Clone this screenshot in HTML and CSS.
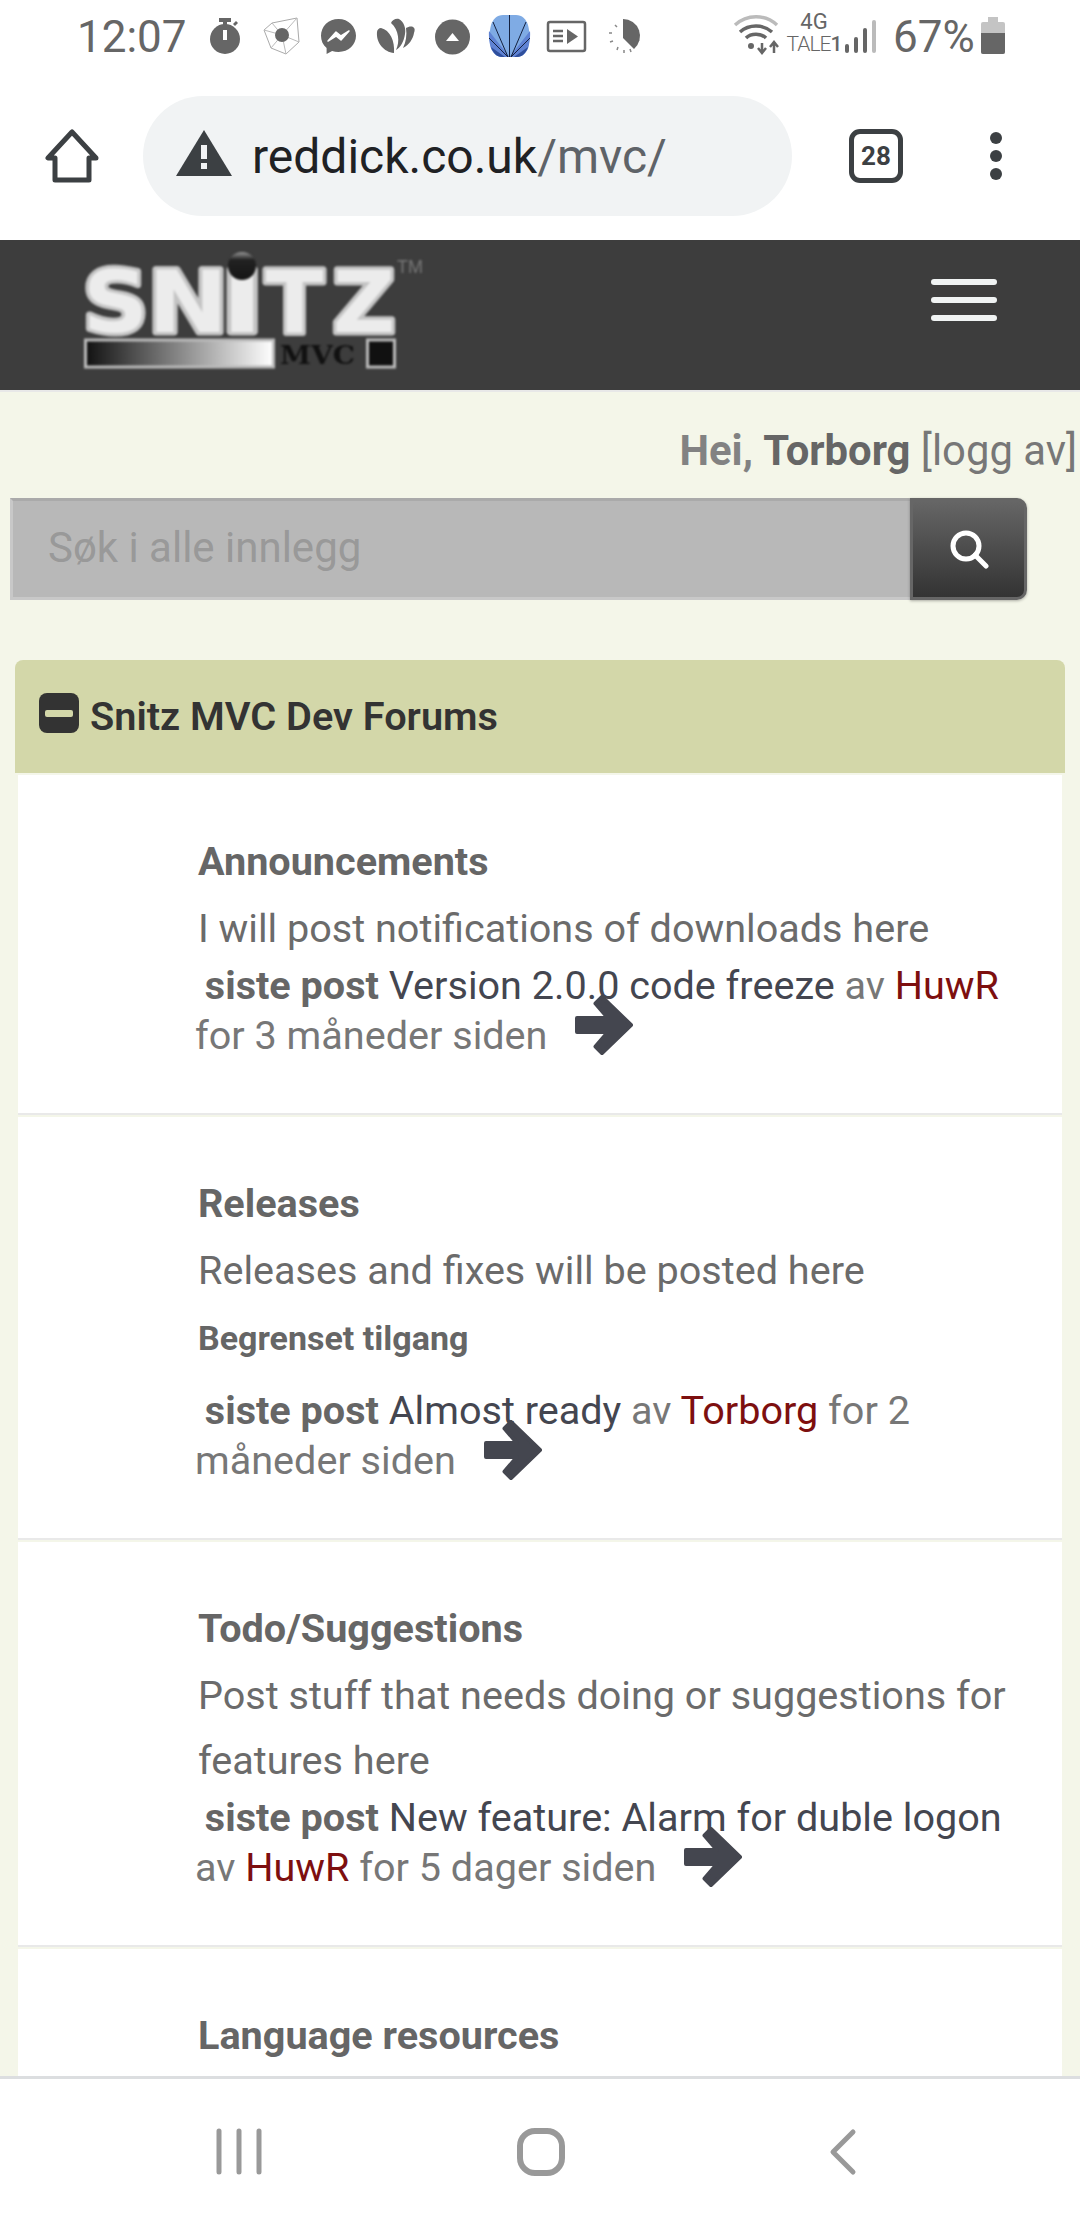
FILE: index.html
```html
<!DOCTYPE html>
<html lang="nb">
<head>
  <meta charset="UTF-8" />
  <meta name="viewport" content="width=device-width, initial-scale=1.0">
  <title>Snitz MVC Dev Forums</title>
  <link rel="stylesheet" href="styles.css">
</head>
<body>

  <!-- Telefonens statuslinje -->
  <div class="status-bar">
    <span class="clock">12:07</span>
    <div class="notif-icons">
      <svg class="notif" viewBox="0 0 57 60"><path d="M23 18h12v4h-12zM27 22h4v4h-4z" fill="#666"/><path d="M37 24l3-3 2 2-3 3z" fill="#666"/><circle cx="29" cy="39" r="15" fill="#666"/><rect x="27" y="30" width="4" height="10" fill="#fff"/></svg>
      <svg class="notif" viewBox="0 0 57 60"><path d="M11 30l8-7 25-5 2 24-13 12-15-6z" fill="none" stroke="#aaa" stroke-width="1"/><path d="M11 30l18 5M19 23l10 12M44 18l-15 17M46 42l-17-7M33 54l-4-19M18 48l11-13" stroke="#bbb" stroke-width="1"/><circle cx="29" cy="35" r="7" fill="#666"/></svg>
      <svg class="notif" viewBox="0 0 57 60"><path d="M28.500 19c-10 0-17.500 7.400-17.500 16.800 0 5 2 9.300 5.600 12.300v6l5.500-3c2 .6 4.100.9 6.400.9 10 0 17.500-7.300 17.500-16.200S38.500 19 28.500 19z" fill="#666"/><path d="M18 41l8-9 5 4 8-5-8 9-5-4z" fill="#fff" stroke="#fff" stroke-width="1.500" stroke-linejoin="round"/></svg>
      <svg class="notif" viewBox="0 0 57 60"><path d="M27 53C17 52 9 43 10 32c0-2 2-4 4-4 9 2 14 13 13 25z" fill="#666"/><path d="M29 50c4-8 3-20-5-27 1-3 5-5 8-4 5 3 7 9 6 15-1 7-4 13-9 16z" fill="#666"/><path d="M36 48c3-6 4-13 3-20 2-1 5-2 7-1 2 1 2 3 1 6-1 6-5 12-11 15z" fill="#666"/></svg>
      <svg class="notif" viewBox="0 0 57 60"><circle cx="28.500" cy="37" r="17.500" fill="#666"/><path d="M22 41l6.500-8 6.500 8z" fill="#fff"/></svg>
      <svg class="notif" viewBox="0 0 57 60">
        <path d="M22 15h13c6 0 10 4 12 10 2 8 2 16 0 22-2 6-6 10-12 10h-13c-6 0-10-4-12-10-2-6-2-14 0-22 2-6 6-10 12-10z" fill="#7fabe4"/>
        <path d="M8 31l20.500 26h-7c-6 0-10-4-12-10-1-5-2-10-1.500-16zM49 31l-20.500 26h7c6 0 10-4 12-10 1-5 2-10 1.500-16z" fill="#5f82d3"/>
        <path d="M10 47l14 10h-3c-5 0-9-4-11-10zM47 47l-14 10h3c5 0 9-4 11-10z" fill="#2f4f9c"/>
        <path d="M28.500 15v42M12 22l15 35M45 22l-15 35M8 38l19 19M49 38l-19 19" stroke="#14213f" stroke-width="1"/>
      </svg>
      <svg class="notif" viewBox="0 0 57 60"><rect x="10" y="22" width="37" height="29" rx="2" fill="none" stroke="#666" stroke-width="2.500"/><path d="M15 31h10M15 36h10M15 41h10" stroke="#666" stroke-width="2.500"/><path d="M29 29l11 7.500-11 7.500z" fill="#666"/></svg>
      <svg class="notif" viewBox="0 0 57 60"><path d="M28 19a17 17 0 0 1 11 30L28 38z" fill="#666"/><path d="M20 25l2 2M14 33h3M15 42l3-1M22 50l1-3M29 53v-3M36 52l-1-3" stroke="#888" stroke-width="1.500"/></svg>
    </div>
    <div class="sys-icons">
      <svg class="wifi" viewBox="0 0 50 40"><path d="M3 10c12-11 30-11 42 0" fill="none" stroke="#bbb" stroke-width="3.500"/><path d="M8 17c9-8 23-8 32 0M14 23c5-5 15-5 20 0" fill="none" stroke="#666" stroke-width="3.500"/><circle cx="19" cy="31" r="3" fill="#666"/><path d="M30 28v8M26 33l4 5 4-5" fill="none" stroke="#666" stroke-width="2.500"/><path d="M42 38v-9M38 32l4-5 4 5" fill="none" stroke="#666" stroke-width="2.500"/></svg>
      <div class="net-label"><span class="net-type">4G</span><span class="sim-name">TALE<b>1</b></span></div>
      <div class="signal"><i class="bar-1"></i><i class="bar-2"></i><i class="bar-3"></i><i class="bar-4"></i></div>
      <span class="battery-pct">67%</span>
      <div class="battery"><div class="battery-fill"></div></div>
    </div>
  </div>

  <!-- Chrome adresselinje -->
  <div class="browser-bar">
    <svg class="home-icon" viewBox="0 0 54 54"><path d="M27 3L3 29h7v22h34V29h7z" fill="none" stroke="#3c4043" stroke-width="5" stroke-linejoin="round"/></svg>
    <div class="url-pill">
      <svg class="warn-icon" viewBox="0 0 56 46"><path d="M28 0l28 46H0z" fill="#3c4043"/><rect x="25" y="15" width="6" height="14" fill="#f1f3f4"/><rect x="25" y="33" width="6" height="6" fill="#f1f3f4"/></svg>
      <span class="url-host">reddick.co.uk</span><span class="url-path">/mvc/</span>
    </div>
    <div class="tab-count">28</div>
    <div class="menu-dots"><i></i><i></i><i></i></div>
  </div>

  <div class="page">
    <header class="site-header">
      <svg class="logo" viewBox="0 0 350 130">
        <defs>
          <linearGradient id="barfade"><stop offset="0" stop-color="#111"/><stop offset="1" stop-color="#fff"/></linearGradient>
          <linearGradient id="ballfade" x2="0" y2="1"><stop offset="0" stop-color="#999"/><stop offset=".28" stop-color="#222"/><stop offset="1" stop-color="#151515"/></linearGradient>
        </defs>
        <text class="logo-word" x="2.500" y="84" textLength="66" lengthAdjust="spacingAndGlyphs">S</text>
        <text class="logo-word" x="67.500" y="84" textLength="81" lengthAdjust="spacingAndGlyphs">N</text>
        <text class="logo-word" x="140.700" y="84" textLength="43" lengthAdjust="spacingAndGlyphs">I</text>
        <text class="logo-word" x="185.500" y="84" textLength="58" lengthAdjust="spacingAndGlyphs">T</text>
        <text class="logo-word" x="252.500" y="84" textLength="63" lengthAdjust="spacingAndGlyphs">Z</text>
        <circle cx="162" cy="18" r="14" fill="url(#ballfade)"/>
        <text class="logo-tm" x="343" y="25" text-anchor="end">TM</text>
        <rect x="5.500" y="92" width="188" height="27" fill="url(#barfade)" stroke="#bbb" stroke-width="3"/>
        <text class="logo-mvc" x="200" y="116" textLength="75" lengthAdjust="spacingAndGlyphs">MVC</text>
        <rect x="287.500" y="92" width="27" height="27" fill="#111" stroke="#bbb" stroke-width="3"/>
      </svg>
      <div class="burger"><i></i><i></i><i></i></div>
    </header>

    <div class="user-line"><b class="hei">Hei,</b> <b>Torborg</b> [logg av]</div>

    <form class="search">
      <div class="search-input">Søk i alle innlegg</div>
      <div class="search-btn">
        <svg viewBox="0 0 40 40"><circle cx="17" cy="17" r="13" fill="none" stroke="#fff" stroke-width="5"/><path d="M26 26l11 11" stroke="#fff" stroke-width="5" stroke-linecap="round"/></svg>
      </div>
    </form>

    <section class="panel">
      <div class="panel-head">
        <span class="collapse-icon"><i></i></span>
        <h2>Snitz MVC Dev Forums</h2>
      </div>

      <div class="forum">
        <h3>Announcements</h3>
        <p class="forum-desc">I will post notifications of downloads here</p>
        <p class="last-post"><b>&nbsp;siste post</b> <span class="topic">Version 2.0.0 code freeze</span> av <a>HuwR</a> for 3 måneder siden <svg class="go-arrow" viewBox="0 0 60 62"><use href="#arrow-shape"/></svg></p>
      </div>

      <div class="forum">
        <h3>Releases</h3>
        <p class="forum-desc">Releases and fixes will be posted here</p>
        <p class="restricted">Begrenset tilgang</p>
        <p class="last-post"><b>&nbsp;siste post</b> <span class="topic">Almost ready</span> av <a>Torborg</a> for 2 måneder siden <svg class="go-arrow" viewBox="0 0 60 62"><use href="#arrow-shape"/></svg></p>
      </div>

      <div class="forum">
        <h3>Todo/Suggestions</h3>
        <p class="forum-desc">Post stuff that needs doing or suggestions for features here</p>
        <p class="last-post"><b>&nbsp;siste post</b> <span class="topic">New feature: Alarm for duble logon</span> av <a>HuwR</a> for 5 dager siden <svg class="go-arrow" viewBox="0 0 60 62"><use href="#arrow-shape"/></svg></p>
      </div>

      <div class="forum">
        <h3>Language resources</h3>
      </div>
    </section>
  </div>

  <!-- Androids navigasjonslinje -->
  <nav class="nav-bar">
    <svg class="nav-icon" viewBox="0 0 60 60"><path d="M10 11v41M30 11v41M50 11v41" stroke="#999" stroke-width="5" stroke-linecap="round"/></svg>
    <svg class="nav-icon" viewBox="0 0 60 60"><rect x="9" y="11" width="42" height="42" rx="15" fill="none" stroke="#999" stroke-width="6"/></svg>
    <svg class="nav-icon" viewBox="0 0 60 60"><path d="M40 12L20 32l20 20" fill="none" stroke="#999" stroke-width="5" stroke-linecap="round" stroke-linejoin="round"/></svg>
  </nav>

  <svg class="svg-defs" width="0" height="0"><defs><path id="arrow-shape" d="M2 23H33L20.500 8.500 27 2 56 30 27 58 20.500 51.500 33 37H2Z" fill="#44464f" stroke="#44464f" stroke-width="4" stroke-linejoin="round"/></defs></svg>

</body>
</html>
```

FILE: styles.css
```css
:root {
  --page-bg: #f4f6e9;
  --head-bg: #d3d7a9;
  --dark: #3d3d3d;
  --text: #6b6b6b;
}
* {
  box-sizing: border-box;
}
html, body {
  margin: 0;
  padding: 0;
  height: 2220px;
  overflow: hidden;
}
body {
  display: flex;
  flex-direction: column;
  font-family: Roboto, sans-serif;
  background: #fff;
  color: var(--text);
}

/* statuslinje */
.status-bar {
  height: 72px;
  display: flex;
  align-items: flex-start;
  padding: 10px 0 0 77px;
  position: relative;
}
.clock {
  font-size: 44px;
  line-height: 54px;
  color: #666;
  width: 119px;
}
.notif-icons {
  display: flex;
}
.notif {
  width: 57px;
  height: 60px;
  margin-top: -10px;
}
.sys-icons {
  display: flex;
  margin-left: 80px;
  height: 54px;
}
.wifi {
  width: 50px;
  height: 40px;
  margin-top: 5px;
}
.net-label {
  width: 52px;
  margin-left: 6px;
  display: flex;
  flex-direction: column;
  align-items: center;
  color: #666;
}
.net-type {
  font-size: 22px;
  line-height: 24px;
}
.sim-name {
  font-size: 21px;
  line-height: 20px;
  font-weight: 300;
  letter-spacing: -1px;
  white-space: nowrap;
}
.sim-name b {
  font-weight: 500;
}
.signal {
  display: flex;
  align-items: flex-end;
  gap: 5px;
  height: 33px;
  margin: 10px 0 0 5px;
}
.signal i {
  width: 4px;
  background: #666;
  border-radius: 2px;
}
.bar-1 { height: 9px; }
.bar-2 { height: 16px; }
.bar-3 { height: 25px; }
.signal .bar-4 { height: 33px; background: #bbb; }
.battery-pct {
  font-size: 44px;
  line-height: 54px;
  color: #666;
  margin-left: 17px;
  width: 88px;
}
.battery {
  width: 24px;
  height: 32px;
  margin-top: 12px;
  background: #c4c4c4;
  border-radius: 2px;
  display: flex;
  align-items: flex-end;
  position: relative;
}
.battery::before {
  content: "";
  position: absolute;
  top: -5px;
  left: 7px;
  width: 10px;
  height: 5px;
  background: #c4c4c4;
}
.battery-fill {
  width: 100%;
  height: 21px;
  background: #666;
  border-radius: 0 0 2px 2px;
}

/* adresselinje */
.browser-bar {
  height: 168px;
  display: flex;
  align-items: center;
  padding: 0 0 0 45px;
  flex-shrink: 0;
}
.home-icon {
  width: 54px;
  height: 54px;
}
.url-pill {
  width: 649px;
  height: 120px;
  margin-left: 44px;
  border-radius: 60px;
  background: #f1f3f4;
  display: flex;
  align-items: center;
  padding-left: 33px;
  font-size: 48px;
}
.warn-icon {
  width: 56px;
  height: 46px;
  margin-right: 20px;
  margin-top: -6px;
}
.url-host {
  color: #202124;
}
.url-path {
  color: #5f6368;
}
.tab-count {
  width: 54px;
  height: 54px;
  margin-left: 57px;
  border: 5px solid #3c4043;
  border-radius: 11px;
  color: #3c4043;
  font-size: 26px;
  font-weight: 700;
  line-height: 44px;
  text-align: center;
}
.menu-dots {
  margin-left: 87px;
  display: flex;
  flex-direction: column;
  gap: 6px;
}
.menu-dots i {
  width: 12px;
  height: 12px;
  border-radius: 50%;
  background: #3c4043;
}

/* siden */
.page {
  flex: 1;
  min-height: 0;
  overflow: hidden;
  background: var(--page-bg);
}
.site-header {
  height: 152px;
  background: var(--dark);
  border-bottom: 2px solid #e8e8e8;
  display: flex;
  justify-content: space-between;
  align-items: flex-start;
  padding: 8px 0 0 80px;
}
.logo {
  width: 350px;
  height: 130px;
  filter: blur(0.8px);
}
.logo-word {
  font-family: "DejaVu Sans", sans-serif;
  font-weight: 700;
  font-size: 85px;
  fill: #ececec;
  stroke: #c4c4c4;
  stroke-width: 7px;
  stroke-linejoin: round;
  paint-order: stroke;
}
.logo-tm {
  font-family: "Liberation Sans", sans-serif;
  font-size: 18px;
  fill: #777;
}
.logo-mvc {
  font-family: "DejaVu Serif", serif;
  font-weight: 700;
  font-size: 26px;
  fill: #111;
}
.burger {
  width: 66px;
  margin: 31px 83px 0 0;
  display: flex;
  flex-direction: column;
  gap: 12px;
}
.burger i {
  height: 6px;
  border-radius: 3px;
  background: #f0f3f3;
}
.user-line {
  height: 106px;
  padding: 34px 3px 0 0;
  text-align: right;
  font-size: 41.800px;
  line-height: 50px;
  color: #777;
  white-space: nowrap;
}
.user-line b {
  color: #666;
}
.user-line .hei {
  color: #828282;
}
.search {
  display: flex;
  height: 102px;
  margin-left: 10px;
  width: 1017px;
}
.search-input {
  flex: 1;
  background: #b8b8b8;
  border: 3px solid #c8c8c8;
  border-top-color: #aaa;
  border-right: 0;
  color: #999;
  font-size: 42px;
  line-height: 94px;
  padding-left: 35px;
}
.search-btn {
  width: 117px;
  background: linear-gradient(#666, #333);
  border: 3px solid #666;
  border-radius: 0 10px 10px 0;
  box-shadow: 0 1px 3px rgba(0, 0, 0, 0.3);
  display: flex;
  align-items: center;
  justify-content: center;
}
.search-btn svg {
  width: 40px;
  height: 40px;
}
.panel {
  margin: 60px 15px 0;
}
.panel-head {
  height: 113px;
  background: var(--head-bg);
  border-radius: 8px 8px 0 0;
  display: flex;
  align-items: flex-start;
  padding: 33px 0 0 24px;
}
.collapse-icon {
  width: 40px;
  height: 40px;
  background: #333;
  border-radius: 8px;
  display: flex;
  align-items: center;
  justify-content: center;
}
.collapse-icon i {
  width: 28px;
  height: 7px;
  border-radius: 2px;
  background: var(--head-bg);
}
.panel-head h2 {
  margin: 0 0 0 11px;
  font-size: 39.700px;
  line-height: 48px;
  color: #333;
  font-weight: 600;
}
.forum {
  margin: 2px 3px 0;
  padding: 52px 40px 52px 180px;
  background: #fff;
  border-bottom: 2px solid #e9e9e9;
}
.forum h3 {
  margin: 0;
  font-size: 39.600px;
  line-height: 69px;
  font-weight: 700;
  color: #666;
}
.forum-desc {
  margin: 0;
  font-size: 39.600px;
  line-height: 65px;
  color: #6b6b6b;
}
.restricted {
  margin: 0 0 13px;
  font-size: 34px;
  font-weight: 700;
  line-height: 70px;
  color: #666;
}
.last-post {
  margin: 0 0 0 -3px;
  font-size: 39.600px;
  line-height: 50px;
  color: #777;
}
.last-post b {
  color: #666;
}
.topic {
  color: #444650;
}
.last-post a {
  color: #7d0f0f;
}
.go-arrow {
  width: 60px;
  height: 62px;
  margin: -20px 0 0 18px;
  vertical-align: -8px;
}
.svg-defs {
  position: absolute;
}

/* navigasjon */
.nav-bar {
  height: 144px;
  flex-shrink: 0;
  background: #fff;
  border-top: 3px solid #dcdee0;
  display: flex;
  align-items: center;
  padding-left: 209px;
  gap: 242px;
}
.nav-icon {
  width: 60px;
  height: 60px;
}
```
